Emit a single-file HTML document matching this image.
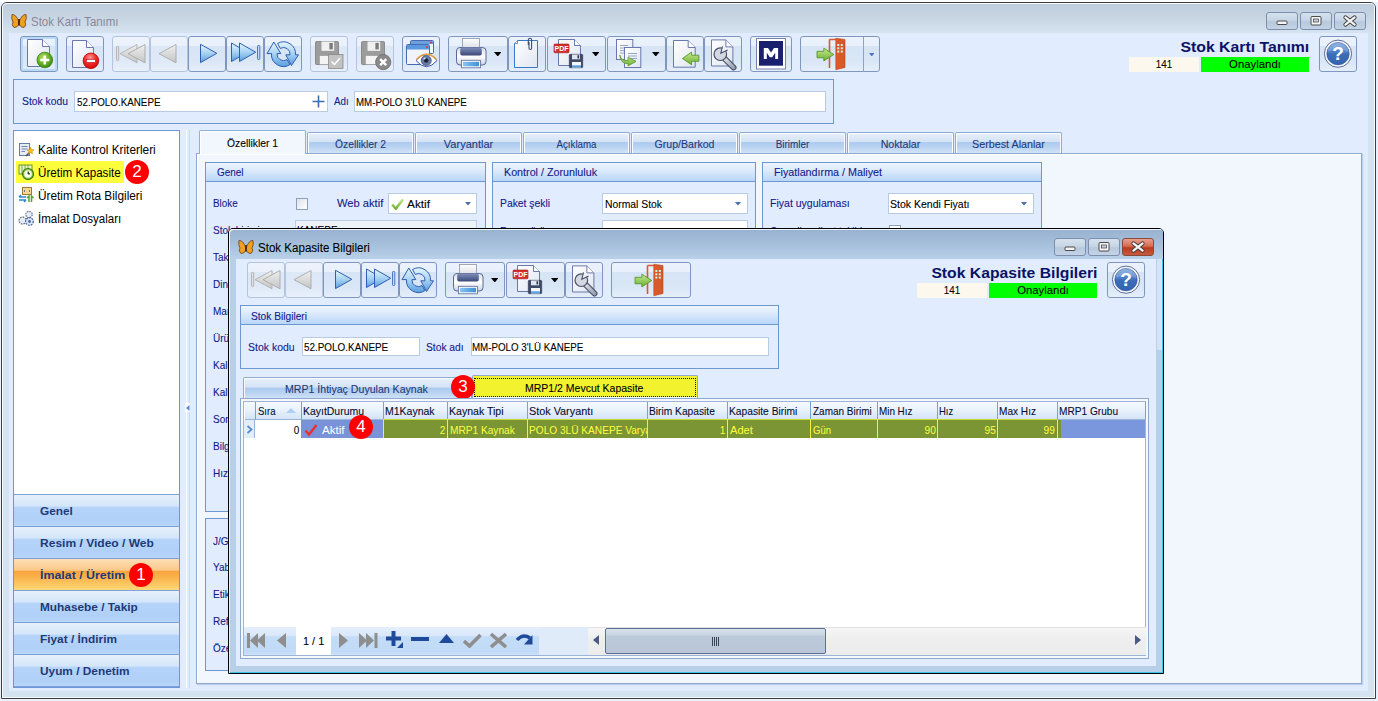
<!DOCTYPE html><html><head><meta charset="utf-8"><style>
*{box-sizing:border-box}
html,body{margin:0;padding:0}
body{width:1378px;height:701px;overflow:hidden;position:relative;background:#e8f1fc;font-family:"Liberation Sans",sans-serif;font-size:11px}
.a{position:absolute}
.t{position:absolute;white-space:nowrap}
.btn{position:absolute;border:1px solid #7f97bf;border-radius:3px;background:linear-gradient(#ebf2fc 0,#e8f0fb 25%,#d7e4f5 27%,#d9e6f6 70%,#e5eefa 100%)}
.btn.dis{border-color:#b3c4db;background:linear-gradient(#edf3fc 0,#eaf1fb 25%,#dde8f6 27%,#dfe9f7 70%,#e8f0fb 100%)}
.inp{position:absolute;background:#fff;border:1px solid #b9cbe4}
.grp{position:absolute;border:1px solid #6e97d0;background:#e1edfe}
.gh{position:absolute;background:linear-gradient(#eef5fe 0,#dae9fb 45%,#b9d6f8 100%);border-bottom:1px solid #6e97d0}
.tab{position:absolute;border:1px solid #8fa8d4;border-bottom:none;border-radius:2px 2px 0 0;box-shadow:inset 1px 1px 0 #fafcff,inset -1px 0 0 #fafcff;background:linear-gradient(#e9f0fa 0,#d3e2f5 44%,#acc9ee 48%,#bcd5f2 75%,#d2e3f8 100%)}
.badge{position:absolute;width:24px;height:24px;border-radius:50%;background:#ff0000;color:#fff;font-size:17px;line-height:24px;text-align:center;font-weight:normal}
.nav{position:absolute;left:14px;width:165px;height:32px;border-top:1px solid #7ea2d6;background:linear-gradient(#e6f0fc 0,#d4e6fb 36%,#b6d4f9 39%,#b0d0f8 80%,#b8d6f9 100%)}
.hd{position:absolute;top:402px;height:18px;border-right:1px solid #7aa0d4;border-bottom:1px solid #9bb5da;background:linear-gradient(#f6faff 0,#e8f1fc 50%,#d3e3f6 100%)}
.cell{position:absolute;top:419px;height:19px;background:#7b9434;border-left:1px solid #f0f040;color:#ffff40;box-shadow:inset 0 1px 0 #c8dc30}
</style></head><body><svg width="0" height="0" style="position:absolute"><defs>
<linearGradient id="gdoc" x1="0" y1="0" x2="1" y2="1"><stop offset="0" stop-color="#ffffff"/><stop offset="1" stop-color="#dfe5f0"/></linearGradient>
<radialGradient id="ggreen" cx=".4" cy=".35" r=".7"><stop offset="0" stop-color="#b5e06a"/><stop offset=".6" stop-color="#5fae22"/><stop offset="1" stop-color="#3d8a12"/></radialGradient>
<radialGradient id="gred" cx=".45" cy=".3" r=".75"><stop offset="0" stop-color="#ff9a9a"/><stop offset=".5" stop-color="#f02828"/><stop offset="1" stop-color="#c80a0a"/></radialGradient>
<linearGradient id="gblue" x1="0" y1="0" x2="0" y2="1"><stop offset="0" stop-color="#d4e8fb"/><stop offset=".5" stop-color="#7fb6ea"/><stop offset="1" stop-color="#3c86d6"/></linearGradient>
<linearGradient id="gblue2" x1="0" y1="0" x2="0" y2="1"><stop offset="0" stop-color="#e4f6fe"/><stop offset=".5" stop-color="#a6d2f2"/><stop offset="1" stop-color="#5a9ee0"/></linearGradient>
<linearGradient id="ggreen2" x1="0" y1="0" x2="0" y2="1"><stop offset="0" stop-color="#c8e890"/><stop offset="1" stop-color="#6ab030"/></linearGradient>
<linearGradient id="gpaper" x1="0" y1="0" x2="0" y2="1"><stop offset="0" stop-color="#ffffff"/><stop offset="1" stop-color="#d4d8e0"/></linearGradient>
<linearGradient id="gpbody" x1="0" y1="0" x2="0" y2="1"><stop offset="0" stop-color="#d8dce8"/><stop offset=".5" stop-color="#ffffff"/><stop offset="1" stop-color="#c8d0e0"/></linearGradient>
<linearGradient id="gpslot" x1="0" y1="0" x2="0" y2="1"><stop offset="0" stop-color="#8090b8"/><stop offset="1" stop-color="#3a4878"/></linearGradient>
<linearGradient id="gtray" x1="0" y1="0" x2="1" y2="0"><stop offset="0" stop-color="#8ac4f0"/><stop offset="1" stop-color="#3a90d8"/></linearGradient>
<linearGradient id="gwrench" x1="0" y1="0" x2="1" y2="1"><stop offset="0" stop-color="#f0f2f6"/><stop offset="1" stop-color="#98a0b0"/></linearGradient>
<linearGradient id="ggray" x1="0" y1="0" x2="0" y2="1"><stop offset="0" stop-color="#f0f0f0"/><stop offset="1" stop-color="#c4c4c4"/></linearGradient>
<linearGradient id="ghelp" x1="0" y1="0" x2="0" y2="1"><stop offset="0" stop-color="#7aa4dc"/><stop offset=".45" stop-color="#4a7cc4"/><stop offset=".5" stop-color="#3e6eb8"/><stop offset="1" stop-color="#3462b0"/></linearGradient>
<linearGradient id="gdoor" x1="0" y1="0" x2="1" y2="0"><stop offset="0" stop-color="#e0582a"/><stop offset="1" stop-color="#d05a2a"/></linearGradient>
</defs></svg>
<div class="a" style="left:0;top:0;width:1378px;height:2px;background:#fdfeff"></div>
<div class="a" style="left:1px;top:2px;width:1375px;height:697px;border:1px solid #3e3e3e;border-radius:6px 6px 0 0;background:#d5e2ef"></div>
<div class="a" style="left:2px;top:3px;width:1373px;height:695px;border-radius:5px 5px 0 0;box-shadow:inset 1px 1px 0 #f6f9fd,inset -1px -1px 0 #f6f9fd"></div>
<div class="a" style="left:3px;top:4px;width:1371px;height:29px;border-radius:4px 4px 0 0;background:linear-gradient(#bfcedd 0,#c6d4e2 40%,#d5e2ef 100%)"></div>
<div class="a" style="left:9px;top:33px;width:1359px;height:658px;background:#e1edfe"></div>
<svg class="a" style="left:11px;top:13px" width="16" height="16" viewBox="0 0 16 16"><path d="M8,9 Q5,1 1,1.5 Q0,6 2,9 Q0,12 3,14.5 Q6,15 8,11 Z" fill="#f0a020" stroke="#5a3010" stroke-width=".7"/><path d="M8,9 Q11,1 15,1.5 Q16,6 14,9 Q16,12 13,14.5 Q10,15 8,11 Z" fill="#f0a020" stroke="#5a3010" stroke-width=".7"/><path d="M8,6 V12.5" stroke="#3a2010" stroke-width="1.6"/></svg>
<div class="t" style="left:31px;top:14.0px;font-size:12.5px;line-height:16px;color:#8a8698;font-weight:normal;letter-spacing:0px;transform:scaleX(0.9148532967392015);transform-origin:0 0;">Stok Kartı Tanımı</div>
<div class="a" style="left:1266px;top:12px;width:32px;height:18px;border:1px solid #7c8fae;border-radius:3px;background:linear-gradient(#d6e1ee 0,#c7d5e5 45%,#b8c9dd 55%,#c4d3e4 100%)"></div>
<svg class="a" style="left:1266px;top:12px" width="32" height="18" viewBox="0 0 32 18"><rect x="11.0" y="9.0" width="10" height="3.5" rx="1" fill="#f4f4f4" stroke="#3a3a3a" stroke-width=".9"/></svg>
<div class="a" style="left:1300px;top:12px;width:32px;height:18px;border:1px solid #7c8fae;border-radius:3px;background:linear-gradient(#d6e1ee 0,#c7d5e5 45%,#b8c9dd 55%,#c4d3e4 100%)"></div>
<svg class="a" style="left:1300px;top:12px" width="32" height="18" viewBox="0 0 32 18"><rect x="11.0" y="4.5" width="10" height="8.5" rx="1" fill="#f4f4f4" stroke="#3a3a3a" stroke-width=".9"/><rect x="13.4" y="7.0" width="5.2" height="3" fill="#c8d2e0" stroke="#3a3a3a" stroke-width=".7"/></svg>
<div class="a" style="left:1334px;top:12px;width:32px;height:18px;border:1px solid #7c8fae;border-radius:3px;background:linear-gradient(#d6e1ee 0,#c7d5e5 45%,#b8c9dd 55%,#c4d3e4 100%)"></div>
<svg class="a" style="left:1334px;top:12px" width="32" height="18" viewBox="0 0 32 18"><path d="M11.4,5.4 L20.6,12.6 M20.6,5.4 L11.4,12.6" stroke="#3a3a3a" stroke-width="4" stroke-linecap="round"/><path d="M11.4,5.4 L20.6,12.6 M20.6,5.4 L11.4,12.6" stroke="#f6f6f6" stroke-width="2.3" stroke-linecap="round"/></svg>
<div class="btn" style="left:20px;top:36px;width:38px;height:36px;box-shadow:inset 0 0 0 2px #b9daf6"></div>
<svg class="a" style="left:20px;top:36px" width="38" height="36" viewBox="0 0 38 36"><path d="M7.5,3.5 H22.5 L29.5,10.5 V30.5 H7.5 Z" fill="url(#gdoc)" stroke="#6a78ad"/><path d="M22.5,3.5 V10.5 H29.5" fill="#fff" stroke="#6a78ad"/><circle cx="24.8" cy="24" r="7.8" fill="url(#ggreen)" stroke="#3a7a14" stroke-width=".8"/><path d="M24.8,19.5V28.5M20.3,24H29.3" stroke="#fff" stroke-width="2.6"/></svg>
<div class="btn" style="left:66px;top:36px;width:38px;height:36px;"></div>
<svg class="a" style="left:66px;top:36px" width="38" height="36" viewBox="0 0 38 36"><path d="M6.5,4.5 H20.5 L27.5,11.5 V31.5 H6.5 Z" fill="url(#gdoc)" stroke="#6a78ad"/><path d="M20.5,4.5 V11.5 H27.5" fill="#fff" stroke="#6a78ad"/><circle cx="24.9" cy="24.8" r="7.8" fill="url(#gred)" stroke="#b80000" stroke-width=".8"/><rect x="20.3" y="23.3" width="9.2" height="3.2" fill="#fff" stroke="#c00000" stroke-width=".6"/></svg>
<div class="btn dis" style="left:112px;top:36px;width:38px;height:36px;"></div>
<svg class="a" style="left:112px;top:36px" width="37" height="36" viewBox="0 0 37 36"><rect x="4.5" y="10.5" width="2.2" height="14" rx=".8" fill="#e0e0e0" stroke="#a8a8a8" stroke-width=".8"/><path d="M25,8.5 V26.8 L8,17.7 Z" fill="url(#ggray)" stroke="#b0b0b0" stroke-width=".9"/><path d="M33,8.5 V26.8 L16,17.7 Z" fill="url(#ggray)" stroke="#a8a8a8" stroke-width=".9"/></svg>
<div class="btn dis" style="left:150px;top:36px;width:38px;height:36px;"></div>
<svg class="a" style="left:150px;top:36px" width="37" height="36" viewBox="0 0 37 36"><path d="M26,8.5 V26.8 L9,17.7 Z" fill="url(#ggray)" stroke="#a8a8a8" stroke-width=".9"/></svg>
<div class="btn" style="left:188px;top:36px;width:38px;height:36px;"></div>
<svg class="a" style="left:188px;top:36px" width="37" height="36" viewBox="0 0 37 36"><path d="M12.5,8.3 V26.6 L28.8,17.3 Z" fill="url(#gblue2)" stroke="#2f5fb0" stroke-width="1"/></svg>
<div class="btn" style="left:226px;top:36px;width:38px;height:36px;"></div>
<svg class="a" style="left:226px;top:36px" width="37" height="36" viewBox="0 0 37 36"><path d="M5.5,7 V25.5 L21.5,16.2 Z" fill="url(#gblue2)" stroke="#2f5fb0" stroke-width="1"/><path d="M13.5,7 V25.5 L29.7,16.2 Z" fill="url(#gblue2)" stroke="#2f5fb0" stroke-width="1"/><rect x="31.5" y="9.5" width="2.3" height="14" rx=".8" fill="#b8daf6" stroke="#2f5fb0" stroke-width=".8"/></svg>
<div class="btn" style="left:264px;top:36px;width:38px;height:36px;"></div>
<svg class="a" style="left:264px;top:36px" width="37" height="36" viewBox="0 0 37 36"><path d="M26,28.6 A12,12 0 0 1 7.5,17.6 L3,17.6 L9.8,6 L16.8,17.6 L13,17.6 A6.5,6.5 0 0 0 23,23.6 Z" fill="url(#gblue2)" stroke="#2f5fb0" stroke-width="1"/><path d="M13.5,7.5 A12,12 0 0 1 31.5,18.8 L34.5,18.8 L27.5,29.5 L21.8,18.8 L26,18.8 A6.5,6.5 0 0 0 16.3,12.4 Z" fill="url(#gblue2)" stroke="#2f5fb0" stroke-width="1"/></svg>
<div class="btn dis" style="left:310px;top:36px;width:38px;height:36px;"></div>
<svg class="a" style="left:310px;top:36px" width="38" height="36" viewBox="0 0 38 36"><rect x="5.5" y="5.5" width="23" height="23" rx="1" fill="#9c9c9c" stroke="#7c7c7c" stroke-width=".8"/><rect x="11.48" y="5.5" width="12.72" height="9.36" fill="#f0f0f0"/><rect x="19.4" y="6.92" width="3.3600000000000003" height="6.48" fill="#7a7a7a"/><rect x="9.8" y="19.88" width="14.399999999999999" height="8.399999999999999" fill="#f4f4f4"/><rect x="18.5" y="18.5" width="14.5" height="14" fill="#c2c2c2" stroke="#8a8a8a" stroke-width=".8"/><path d="M21.5,25.5 L24.5,28.5 L30,22" fill="none" stroke="#fff" stroke-width="1.5"/></svg>
<div class="btn dis" style="left:356px;top:36px;width:38px;height:36px;"></div>
<svg class="a" style="left:356px;top:36px" width="38" height="36" viewBox="0 0 38 36"><rect x="5.5" y="5.5" width="23" height="23" rx="1" fill="#9c9c9c" stroke="#7c7c7c" stroke-width=".8"/><rect x="11.48" y="5.5" width="12.72" height="9.36" fill="#f0f0f0"/><rect x="19.4" y="6.92" width="3.3600000000000003" height="6.48" fill="#7a7a7a"/><rect x="9.8" y="19.88" width="14.399999999999999" height="8.399999999999999" fill="#f4f4f4"/><circle cx="27.2" cy="26.1" r="7.6" fill="#8a8a8a" stroke="#6a6a6a" stroke-width=".8"/><path d="M24.2,23.1 L30.2,29.1 M30.2,23.1 L24.2,29.1" stroke="#fff" stroke-width="2.4"/></svg>
<div class="btn" style="left:402px;top:36px;width:38px;height:36px;"></div>
<svg class="a" style="left:402px;top:36px" width="38" height="36" viewBox="0 0 38 36"><rect x="8.5" y="4.5" width="23" height="13" rx="1" fill="#f4f8fc" stroke="#4a6ab0"/><rect x="9" y="5" width="22" height="3" fill="#6aa0e0"/><circle cx="29" cy="6.5" r="1" fill="#f03030"/><rect x="4.5" y="8.5" width="23" height="20" rx="1" fill="#f0f4fa" stroke="#4a6ab0"/><rect x="5" y="9" width="22" height="4.5" fill="#5a98e0"/><circle cx="25" cy="11" r="1.1" fill="#f03030"/><path d="M14,24.5 Q24.5,12 35,24.5 Q24.5,37 14,24.5 Z" fill="#fff" stroke="#3a58a8" stroke-width="1"/><path d="M14.5,23.5 Q24.5,13 34.5,23.5" fill="none" stroke="#e8a040" stroke-width="1.6"/><circle cx="24.2" cy="24.5" r="5" fill="#6a7ea8" stroke="#3a4a78" stroke-width=".8"/><circle cx="24.2" cy="24.5" r="2.3" fill="#1a2440"/><circle cx="22.5" cy="22.5" r="1" fill="#c8f0f0"/></svg>
<div class="btn" style="left:448px;top:36px;width:60px;height:36px;"></div>
<svg class="a" style="left:448px;top:36px" width="42" height="36" viewBox="0 0 42 36"><rect x="14.5" y="2.5" width="17" height="12" fill="url(#gpaper)" stroke="#8a94a8" stroke-width=".8"/><rect x="8.5" y="11.5" width="29.5" height="17.5" rx="3.5" fill="url(#gpbody)" stroke="#5a6894" stroke-width="1"/><rect x="12.2" y="11.5" width="21.6" height="8" rx="2" fill="url(#gpslot)"/><rect x="13.5" y="24.3" width="19" height="7.5" fill="#fff" stroke="#5a6894" stroke-width=".8"/><rect x="15" y="25.8" width="16" height="4.5" fill="url(#gtray)"/></svg>
<svg class="a" style="left:493.7px;top:51.8px" width="7.5" height="4.5" viewBox="0 0 7.5 4.5"><path d="M0,0 H7.5 L3.75,4.5 Z" fill="#000"/></svg>
<div class="btn" style="left:508px;top:36px;width:38px;height:36px;"></div>
<svg class="a" style="left:508px;top:36px" width="38" height="36" viewBox="0 0 38 36"><path d="M9.5,4.5 H29.5 V31.5 H6.5 V7.5 Z" fill="url(#gdoc)" stroke="#3a78c8" stroke-width="1"/><path d="M6.5,7.5 L9.5,7.5 L9.5,4.5" fill="#fff" stroke="#3a78c8" stroke-width=".8"/><path d="M21,6 V12 Q21,13.5 22.3,13.5 Q23.6,13.5 23.6,12 V4 Q23.6,2.2 22,2.2 Q20.3,2.2 20.3,4 V9" fill="none" stroke="#3a4a78" stroke-width="1.1"/></svg>
<div class="btn" style="left:547px;top:36px;width:59px;height:36px;"></div>
<svg class="a" style="left:547px;top:36px" width="42" height="36" viewBox="0 0 42 36"><path d="M11.5,3.5 H27.5 L33.5,9.5 V29.5 H11.5 Z" fill="url(#gdoc)" stroke="#6a78ad"/><path d="M27.5,3.5 V9.5 H33.5" fill="#fff" stroke="#6a78ad"/><rect x="7" y="8" width="15" height="8.8" rx="1" fill="#d42e2e" stroke="#a01818" stroke-width=".6"/><text x="14.5" y="15" font-size="7" font-weight="bold" fill="#fff" text-anchor="middle" font-family="Liberation Sans">PDF</text><rect x="22.3" y="18.3" width="13.4" height="13.4" rx="1" fill="#3e4a68" stroke="#2a3248" stroke-width=".6"/><rect x="25" y="18.5" width="8" height="4.8" fill="#dfe4ee"/><rect x="30.5" y="19.2" width="1.6" height="3.2" fill="#2a3248"/><rect x="25" y="26" width="9" height="5.5" fill="#f4f6fa"/><rect x="25" y="29.3" width="9" height="2.2" fill="#5aa0e0"/></svg>
<svg class="a" style="left:591.7px;top:51.8px" width="7.5" height="4.5" viewBox="0 0 7.5 4.5"><path d="M0,0 H7.5 L3.75,4.5 Z" fill="#000"/></svg>
<div class="btn" style="left:607px;top:36px;width:59px;height:36px;"></div>
<svg class="a" style="left:607px;top:36px" width="42" height="36" viewBox="0 0 42 36"><rect x="9.5" y="3.5" width="16.3" height="20" fill="url(#gdoc)" stroke="#6a78ad" stroke-width="1"/><path d="M13,9.5H21M13,12H20M13,14.5H21M13,17H20" stroke="#8a9ac0" stroke-width=".9"/><rect x="17.5" y="11.5" width="16.3" height="20" fill="url(#gdoc)" stroke="#6a78ad" stroke-width="1"/><path d="M21,17.5H30M21,20H30M21,22.5H30M21,25H29" stroke="#8a9ac0" stroke-width=".9"/><path d="M12.8,19 Q14,25 21,24.5 V21 L28.9,25.5 L21,30 V27.5 Q14,28.5 12.8,19 Z" fill="url(#ggreen2)" stroke="#4a9020" stroke-width=".7"/></svg>
<svg class="a" style="left:652px;top:51.8px" width="7.5" height="4.5" viewBox="0 0 7.5 4.5"><path d="M0,0 H7.5 L3.75,4.5 Z" fill="#000"/></svg>
<div class="btn" style="left:666px;top:36px;width:38px;height:36px;"></div>
<svg class="a" style="left:666px;top:36px" width="38" height="36" viewBox="0 0 38 36"><path d="M7.5,4.5 H22.2 L29.2,11.5 V31.2 H7.5 Z" fill="url(#gdoc)" stroke="#6a78ad"/><path d="M22.2,4.5 V11.5 H29.2" fill="#fff" stroke="#6a78ad"/><path d="M16.4,22.5 L25.6,16 V19.2 H32.9 V25.3 H25.6 V28.8 Z" fill="url(#ggreen2)" stroke="#4a9020" stroke-width=".8"/></svg>
<div class="btn" style="left:704px;top:36px;width:38px;height:36px;"></div>
<svg class="a" style="left:704px;top:36px" width="38" height="36" viewBox="0 0 38 36"><path d="M7.5,3.9 H21.9 L28.9,10.9 V30.0 H7.5 Z" fill="url(#gdoc)" stroke="#6a78ad"/><path d="M21.9,3.9 V10.9 H28.9" fill="#fff" stroke="#6a78ad"/><path d="M17.5,19.5 L29.5,31.5" stroke="#48506a" stroke-width="6" stroke-linecap="round"/><path d="M17.5,19.5 L29.5,31.5" stroke="url(#gwrench)" stroke-width="3.8" stroke-linecap="round"/><circle cx="16.3" cy="18.2" r="6.3" fill="#d4d8e2" stroke="#48506a" stroke-width="1.2"/><path d="M16.6,18 L18.5,9.5 L24.5,13.5 Z" fill="#eef2f8"/><path d="M18.5,10.3 L16.8,17.2 L23.6,14" fill="none" stroke="#48506a" stroke-width="1.1"/></svg>
<div class="btn" style="left:750px;top:36px;width:42px;height:36px;"></div>
<svg class="a" style="left:750px;top:36px" width="42" height="36" viewBox="0 0 42 36"><rect x="6.5" y="2.5" width="29" height="30.5" fill="#ffffff" stroke="#7a82b0" stroke-width="1"/><rect x="9" y="5" width="24" height="24.7" fill="#1a1f6e"/><path d="M13.8,23.1 V12 H18 L21,16.6 L24,12 H28.1 V23.1 H25.2 V16.8 L22.2,21.2 H19.8 L16.8,16.8 V23.1 Z" fill="#fff"/></svg>
<div class="btn" style="left:800px;top:36px;width:80px;height:36px;"></div>
<svg class="a" style="left:800px;top:36px" width="50" height="36" viewBox="0 0 50 36"><path d="M29.5,3.5 H36 M29.5,3.5 V32" fill="none" stroke="#d85a30" stroke-width="1.6"/><path d="M35.8,2.2 L45,3.5 V31.5 L35.8,33.8 Z" fill="url(#gdoor)" stroke="#b84818" stroke-width=".6"/><rect x="37.3" y="8" width="2" height="2" fill="#d8f0e0"/><rect x="40.8" y="8" width="2" height="2" fill="#d8f0e0"/><rect x="37.3" y="11.3" width="2" height="2" fill="#d8f0e0"/><rect x="40.8" y="11.3" width="2" height="2" fill="#d8f0e0"/><rect x="37.3" y="14.6" width="2" height="2" fill="#d8f0e0"/><rect x="40.8" y="14.6" width="2" height="2" fill="#d8f0e0"/><path d="M17,15.3 H23.8 V12.2 L33.8,18.5 L23.8,24.9 V21.8 H17 Z" fill="url(#ggreen2)" stroke="#4a9020" stroke-width=".8"/></svg>
<div class="a" style="left:863px;top:37px;width:1px;height:35px;background:#8ea3c4"></div>
<svg class="a" style="left:868.8px;top:52.8px" width="5.5" height="3.5" viewBox="0 0 5.5 3.5"><path d="M0,0 H5.5 L2.75,3.5 Z" fill="#4a78c0"/></svg>
<div class="t" style="right:69px;text-align:right;top:37.0px;font-size:15px;line-height:20px;color:#0c1266;font-weight:bold;letter-spacing:0px;transform:scaleX(1.0536595342178594);transform-origin:100% 0;">Stok Kartı Tanımı</div>
<div class="a" style="left:1129px;top:57px;width:70px;height:15px;background:#fdf8ee"></div>
<div class="t" style="left:1129px;width:70px;text-align:center;top:57.0px;font-size:11.5px;line-height:15px;color:#000;font-weight:normal;letter-spacing:0px;transform:scaleX(0.8547927355647853);transform-origin:50% 0;-webkit-text-stroke:0.1px #000;">141</div>
<div class="a" style="left:1201px;top:57px;width:108px;height:15px;background:#00ff00"></div>
<div class="t" style="left:1201px;width:108px;text-align:center;top:57.0px;font-size:11.5px;line-height:15px;color:#000;font-weight:normal;letter-spacing:0px;transform:scaleX(0.9881371087928464);transform-origin:50% 0;-webkit-text-stroke:0.1px #000;">Onaylandı</div>
<div class="btn" style="left:1319px;top:36px;width:38px;height:36px;"></div>
<svg class="a" style="left:1319px;top:36px" width="38" height="36" viewBox="0 0 38 36"><circle cx="19" cy="17.7" r="13.6" fill="#f8fafe" stroke="#5a6a98" stroke-width="1"/><circle cx="19" cy="17.7" r="11.2" fill="url(#ghelp)" stroke="#2a5098" stroke-width=".6"/><path d="M8.5,16 Q19,11 29.5,16 Q29,6.5 19,6.5 Q9,6.5 8.5,16 Z" fill="#ffffff" opacity=".18"/><text x="19" y="24.3" font-size="19" font-weight="bold" fill="#fff" text-anchor="middle" font-family="Liberation Sans">?</text></svg>
<div class="grp" style="left:13px;top:79px;width:821px;height:45px"></div>
<div class="t" style="left:21.5px;top:93.0px;font-size:11.5px;line-height:16px;color:#14188a;font-weight:normal;letter-spacing:0px;transform:scaleX(0.8994531178393572);transform-origin:0 0;-webkit-text-stroke:0.1px #14188a;">Stok kodu</div>
<div class="inp" style="left:74px;top:91px;width:254px;height:21px"></div>
<div class="t" style="left:76.5px;top:93.5px;font-size:11.5px;line-height:16px;color:#000;font-weight:normal;letter-spacing:0px;transform:scaleX(0.8538377963826932);transform-origin:0 0;-webkit-text-stroke:0.1px #000;">52.POLO.KANEPE</div>
<svg class="a" style="left:312px;top:95px" width="13" height="13" viewBox="0 0 13 13"><path d="M6.5,0.5V12.5M0.5,6.5H12.5" stroke="#3e6db2" stroke-width="1.6"/></svg>
<div class="t" style="left:333.8px;top:93.0px;font-size:11.5px;line-height:16px;color:#14188a;font-weight:normal;letter-spacing:0px;transform:scaleX(0.8516339277631936);transform-origin:0 0;-webkit-text-stroke:0.1px #14188a;">Adı</div>
<div class="inp" style="left:354px;top:91px;width:472px;height:21px"></div>
<div class="t" style="left:355.7px;top:93.5px;font-size:11.5px;line-height:16px;color:#000;font-weight:normal;letter-spacing:0px;transform:scaleX(0.8439794813201461);transform-origin:0 0;-webkit-text-stroke:0.1px #000;">MM-POLO 3'LÜ KANEPE</div>
<div class="a" style="left:13px;top:130px;width:167px;height:558px;border:1px solid #6b98d8;background:#fff"></div>
<svg class="a" style="left:18px;top:142px" width="16" height="16" viewBox="0 0 16 16"><rect x="1.5" y="1.5" width="10" height="12" fill="#e8ecf6" stroke="#6a78b0"/><path d="M3.5,4.5H9.5M3.5,7H9.5M3.5,9.5H7" stroke="#6a78b0" stroke-width=".9"/><path d="M8,14 L14,8" stroke="#505050" stroke-width="1.6"/><path d="M12.5,5 L13.5,7.5 L16,8 L14,9.5 L14.5,12 L12.5,10.5 L10.5,12 L11,9.5 L9,8 L11.5,7.5 Z" fill="#f8c020" stroke="#d08000" stroke-width=".5"/></svg>
<div class="t" style="left:38px;top:142.0px;font-size:12.5px;line-height:16px;color:#000;font-weight:normal;letter-spacing:0px;transform:scaleX(0.9465219139525534);transform-origin:0 0;">Kalite Kontrol Kriterleri</div>
<div class="a" style="left:16px;top:161px;width:108px;height:22px;background:#ffff3c"></div>
<svg class="a" style="left:18px;top:164px" width="16" height="16" viewBox="0 0 16 16"><rect x="1" y="1" width="13" height="9" fill="#e8f4c8" stroke="#6a9a2a"/><path d="M4,1V10M7,1V10M10,1V10" stroke="#6a9a2a" stroke-width=".8"/><circle cx="10" cy="10" r="5.5" fill="#8cc640" stroke="#3a7a10" stroke-width="1.2"/><circle cx="10" cy="10" r="3.8" fill="#f8fff0"/><path d="M10,7.5V10H12" stroke="#3a5a10" stroke-width="1"/></svg>
<div class="t" style="left:38px;top:164.5px;font-size:12.5px;line-height:16px;color:#000;font-weight:normal;letter-spacing:0px;transform:scaleX(0.9300462141313326);transform-origin:0 0;">Üretim Kapasite</div>
<div class="badge" style="left:125px;top:160px">2</div>
<svg class="a" style="left:18px;top:187px" width="16" height="16" viewBox="0 0 16 16"><rect x="4.5" y="0.5" width="9" height="7" fill="#f8d890" stroke="#a07830"/><path d="M7,3 L6,4 L7,5 M11,3 L12,4 L11,5" stroke="#4060a0" stroke-width=".8" fill="none"/><path d="M1,10 H8 M1,10 L3,8 M8,13 H1 M8,13 L6,15" stroke="#2a88c8" stroke-width="1.5" fill="none"/><path d="M11,15 V9 L9,11 M13.5,15 V9 L15.5,11" stroke="#5aa030" stroke-width="1.5" fill="none"/></svg>
<div class="t" style="left:38px;top:187.5px;font-size:12.5px;line-height:16px;color:#000;font-weight:normal;letter-spacing:0px;transform:scaleX(0.9453176949958263);transform-origin:0 0;">Üretim Rota Bilgileri</div>
<svg class="a" style="left:18px;top:210px" width="16" height="16" viewBox="0 0 16 16"><circle cx="11" cy="4.5" r="3.2" fill="#e8ecf4" stroke="#6a7890" stroke-width="1.2" stroke-dasharray="1.6 .9"/><circle cx="4.5" cy="10.5" r="3.5" fill="#e8ecf4" stroke="#6a7890" stroke-width="1.3" stroke-dasharray="1.7 1"/><circle cx="11.5" cy="11.5" r="3.8" fill="#e0e8f8" stroke="#4a68a8" stroke-width="1.3" stroke-dasharray="1.8 1"/><circle cx="11.5" cy="11.5" r="1.4" fill="#4a68a8"/></svg>
<div class="t" style="left:38px;top:210.5px;font-size:12.5px;line-height:16px;color:#000;font-weight:normal;letter-spacing:0px;transform:scaleX(0.9213094331787667);transform-origin:0 0;">İmalat Dosyaları</div>
<div class="nav" style="top:494px"></div>
<div class="t" style="left:40px;top:502.5px;font-size:11.5px;line-height:16px;color:#1e3a78;font-weight:bold;letter-spacing:0px;transform:scaleX(1.0295325640524153);transform-origin:0 0;">Genel</div>
<div class="nav" style="top:526px"></div>
<div class="t" style="left:40px;top:534.5px;font-size:11.5px;line-height:16px;color:#1e3a78;font-weight:bold;letter-spacing:0px;transform:scaleX(1.0463190228078487);transform-origin:0 0;">Resim / Video / Web</div>
<div class="nav" style="top:558px;background:linear-gradient(#fddfb4 0,#fbc88a 36%,#f9a43c 40%,#fab54e 62%,#fcd878 100%)"></div>
<div class="t" style="left:40px;top:566.5px;font-size:11.5px;line-height:16px;color:#1e3a78;font-weight:bold;letter-spacing:0px;transform:scaleX(1.0763831381363618);transform-origin:0 0;">İmalat / Üretim</div>
<div class="nav" style="top:590px"></div>
<div class="t" style="left:40px;top:598.5px;font-size:11.5px;line-height:16px;color:#1e3a78;font-weight:bold;letter-spacing:0px;transform:scaleX(1.0295325640524153);transform-origin:0 0;">Muhasebe / Takip</div>
<div class="nav" style="top:622px"></div>
<div class="t" style="left:40px;top:630.5px;font-size:11.5px;line-height:16px;color:#1e3a78;font-weight:bold;letter-spacing:0px;transform:scaleX(1.0295325640524153);transform-origin:0 0;">Fiyat / İndirim</div>
<div class="nav" style="top:654px"></div>
<div class="t" style="left:40px;top:662.5px;font-size:11.5px;line-height:16px;color:#1e3a78;font-weight:bold;letter-spacing:0px;transform:scaleX(1.0295325640524153);transform-origin:0 0;">Uyum / Denetim</div>
<div class="a" style="left:14px;top:686px;width:166px;height:1px;background:#7ea2d6"></div>
<div class="badge" style="left:129px;top:563px">1</div>
<div class="a" style="left:186px;top:130px;width:1px;height:558px;background:#fbfdff"></div>
<div class="a" style="left:189px;top:130px;width:1px;height:558px;background:#c6dbf8"></div>
<div class="a" style="left:185px;top:403px;width:5px;height:9px;background:#fbfdff"></div>
<svg class="a" style="left:185.5px;top:404.5px" width="4" height="6" viewBox="0 0 4 6"><path d="M3.5,0 V6 L0,3 Z" fill="#5a88d0"/></svg>
<div class="a" style="left:196px;top:153px;width:1166px;height:531px;border:1px solid #8ea8d0;background:#f2f7fe;box-shadow:inset 1px 1px 0 #fff,1px 1px 1px rgba(120,150,200,.35)"></div>
<div class="tab" style="left:307px;top:132px;width:107px;height:21px"></div>
<div class="t" style="left:307px;width:107px;text-align:center;top:136.3px;font-size:11.5px;line-height:16px;color:#1e3a7a;font-weight:normal;letter-spacing:0px;transform:scaleX(0.8967032967032967);transform-origin:50% 0;-webkit-text-stroke:0.1px #1e3a7a;">Özellikler 2</div>
<div class="tab" style="left:415px;top:132px;width:107px;height:21px"></div>
<div class="t" style="left:415px;width:107px;text-align:center;top:136.3px;font-size:11.5px;line-height:16px;color:#1e3a7a;font-weight:normal;letter-spacing:0px;transform:scaleX(0.958147710397915);transform-origin:50% 0;-webkit-text-stroke:0.1px #1e3a7a;">Varyantlar</div>
<div class="tab" style="left:523px;top:132px;width:107px;height:21px"></div>
<div class="t" style="left:523px;width:107px;text-align:center;top:136.3px;font-size:11.5px;line-height:16px;color:#1e3a7a;font-weight:normal;letter-spacing:0px;transform:scaleX(0.8458336086697945);transform-origin:50% 0;-webkit-text-stroke:0.1px #1e3a7a;">Açıklama</div>
<div class="tab" style="left:631px;top:132px;width:107px;height:21px"></div>
<div class="t" style="left:631px;width:107px;text-align:center;top:136.3px;font-size:11.5px;line-height:16px;color:#1e3a7a;font-weight:normal;letter-spacing:0px;transform:scaleX(0.9202895077409767);transform-origin:50% 0;-webkit-text-stroke:0.1px #1e3a7a;">Grup/Barkod</div>
<div class="tab" style="left:739px;top:132px;width:107px;height:21px"></div>
<div class="t" style="left:739px;width:107px;text-align:center;top:136.3px;font-size:11.5px;line-height:16px;color:#1e3a7a;font-weight:normal;letter-spacing:0px;transform:scaleX(0.859663191659984);transform-origin:50% 0;-webkit-text-stroke:0.1px #1e3a7a;">Birimler</div>
<div class="tab" style="left:847px;top:132px;width:107px;height:21px"></div>
<div class="t" style="left:847px;width:107px;text-align:center;top:136.3px;font-size:11.5px;line-height:16px;color:#1e3a7a;font-weight:normal;letter-spacing:0px;transform:scaleX(0.9271300857507755);transform-origin:50% 0;-webkit-text-stroke:0.1px #1e3a7a;">Noktalar</div>
<div class="tab" style="left:955px;top:132px;width:107px;height:21px"></div>
<div class="t" style="left:955px;width:107px;text-align:center;top:136.3px;font-size:11.5px;line-height:16px;color:#1e3a7a;font-weight:normal;letter-spacing:0px;transform:scaleX(0.9334829299567239);transform-origin:50% 0;-webkit-text-stroke:0.1px #1e3a7a;">Serbest Alanlar</div>
<div class="a" style="left:199px;top:130px;width:107px;height:24px;border:1px solid #8fb0da;border-bottom:none;border-radius:2px 2px 0 0;background:#f2f7fe;box-shadow:inset 1px 1px 0 #fff"></div>
<div class="t" style="left:199px;width:107px;text-align:center;top:135.0px;font-size:11.5px;line-height:16px;color:#000;font-weight:normal;letter-spacing:0px;transform:scaleX(0.8967032967032967);transform-origin:50% 0;-webkit-text-stroke:0.1px #000;">Özellikler 1</div>
<div class="grp" style="left:205px;top:162px;width:281px;height:350px"></div>
<div class="gh" style="left:206px;top:163px;width:279px;height:19px"></div>
<div class="t" style="left:216.5px;top:164.0px;font-size:11.5px;line-height:16px;color:#14188a;font-weight:normal;letter-spacing:0px;transform:scaleX(0.8635877590508682);transform-origin:0 0;-webkit-text-stroke:0.1px #14188a;">Genel</div>
<div class="grp" style="left:492px;top:162px;width:264px;height:439px"></div>
<div class="gh" style="left:493px;top:163px;width:262px;height:19px"></div>
<div class="t" style="left:503.5px;top:164.0px;font-size:11.5px;line-height:16px;color:#14188a;font-weight:normal;letter-spacing:0px;transform:scaleX(0.9326814591951861);transform-origin:0 0;-webkit-text-stroke:0.1px #14188a;">Kontrol / Zorunluluk</div>
<div class="grp" style="left:762px;top:162px;width:280px;height:439px"></div>
<div class="gh" style="left:763px;top:163px;width:278px;height:19px"></div>
<div class="t" style="left:773.5px;top:164.0px;font-size:11.5px;line-height:16px;color:#14188a;font-weight:normal;letter-spacing:0px;transform:scaleX(0.933675536944482);transform-origin:0 0;-webkit-text-stroke:0.1px #14188a;">Fiyatlandırma / Maliyet</div>
<div class="grp" style="left:205px;top:518px;width:396px;height:153px"></div>
<div class="t" style="left:213px;top:195.0px;font-size:11.5px;line-height:16px;color:#14188a;font-weight:normal;letter-spacing:0px;transform:scaleX(0.8551873981531777);transform-origin:0 0;-webkit-text-stroke:0.1px #14188a;">Bloke</div>
<div class="a" style="left:296px;top:198px;width:12px;height:12px;border:1px solid #8f9fb8;background:linear-gradient(135deg,#dde3ec,#ffffff)"></div>
<div class="t" style="left:336.5px;top:194.5px;font-size:11.5px;line-height:16px;color:#14188a;font-weight:normal;letter-spacing:0px;transform:scaleX(0.9701731984415413);transform-origin:0 0;-webkit-text-stroke:0.1px #14188a;">Web aktif</div>
<div class="inp" style="left:388px;top:193px;width:89px;height:21px"></div>
<svg class="a" style="left:391px;top:198px" width="13" height="12" viewBox="0 0 13 12"><path d="M1.2,6.5 L4.8,10.8 L12,1.2" fill="none" stroke="url(#ggreen2)" stroke-width="2.5" stroke-linejoin="round"/></svg>
<div class="t" style="left:407px;top:195.5px;font-size:11.5px;line-height:16px;color:#000;font-weight:normal;letter-spacing:0px;transform:scaleX(1.0283638395975967);transform-origin:0 0;-webkit-text-stroke:0.1px #000;">Aktif</div>
<svg class="a" style="left:464.5px;top:201.5px" width="7" height="4" viewBox="0 0 7 4"><path d="M0,0H6L3,3.5Z" fill="#4a6ea8"/></svg>
<div class="inp" style="left:295px;top:220px;width:182px;height:21px;background:#eef3fa"></div>
<div class="t" style="left:297px;top:221.5px;font-size:11.5px;line-height:16px;color:#000;font-weight:normal;letter-spacing:0px;transform:scaleX(0.87);transform-origin:0 0;-webkit-text-stroke:0.1px #000;">KANEPE</div>
<div class="t" style="left:213px;top:221.5px;font-size:11.5px;line-height:16px;color:#14188a;font-weight:normal;letter-spacing:0px;transform:scaleX(0.87);transform-origin:0 0;-webkit-text-stroke:0.1px #14188a;">Stok birimi</div>
<div class="t" style="left:213px;top:249.0px;font-size:11.5px;line-height:16px;color:#14188a;font-weight:normal;letter-spacing:0px;transform:scaleX(0.87);transform-origin:0 0;-webkit-text-stroke:0.1px #14188a;">Takip şekli</div>
<div class="t" style="left:213px;top:276.0px;font-size:11.5px;line-height:16px;color:#14188a;font-weight:normal;letter-spacing:0px;transform:scaleX(0.87);transform-origin:0 0;-webkit-text-stroke:0.1px #14188a;">Dinamik</div>
<div class="t" style="left:213px;top:303.0px;font-size:11.5px;line-height:16px;color:#14188a;font-weight:normal;letter-spacing:0px;transform:scaleX(0.87);transform-origin:0 0;-webkit-text-stroke:0.1px #14188a;">Marka</div>
<div class="t" style="left:213px;top:330.0px;font-size:11.5px;line-height:16px;color:#14188a;font-weight:normal;letter-spacing:0px;transform:scaleX(0.87);transform-origin:0 0;-webkit-text-stroke:0.1px #14188a;">Ürün tipi</div>
<div class="t" style="left:213px;top:357.0px;font-size:11.5px;line-height:16px;color:#14188a;font-weight:normal;letter-spacing:0px;transform:scaleX(0.87);transform-origin:0 0;-webkit-text-stroke:0.1px #14188a;">Kalite 1</div>
<div class="t" style="left:213px;top:384.0px;font-size:11.5px;line-height:16px;color:#14188a;font-weight:normal;letter-spacing:0px;transform:scaleX(0.87);transform-origin:0 0;-webkit-text-stroke:0.1px #14188a;">Kalite 2</div>
<div class="t" style="left:213px;top:411.0px;font-size:11.5px;line-height:16px;color:#14188a;font-weight:normal;letter-spacing:0px;transform:scaleX(0.87);transform-origin:0 0;-webkit-text-stroke:0.1px #14188a;">Sorumlu</div>
<div class="t" style="left:213px;top:438.0px;font-size:11.5px;line-height:16px;color:#14188a;font-weight:normal;letter-spacing:0px;transform:scaleX(0.87);transform-origin:0 0;-webkit-text-stroke:0.1px #14188a;">Bilgi</div>
<div class="t" style="left:213px;top:465.0px;font-size:11.5px;line-height:16px;color:#14188a;font-weight:normal;letter-spacing:0px;transform:scaleX(0.87);transform-origin:0 0;-webkit-text-stroke:0.1px #14188a;">Hız</div>
<div class="t" style="left:213px;top:533.0px;font-size:11.5px;line-height:16px;color:#14188a;font-weight:normal;letter-spacing:0px;transform:scaleX(0.87);transform-origin:0 0;-webkit-text-stroke:0.1px #14188a;">J/G</div>
<div class="t" style="left:213px;top:559.0px;font-size:11.5px;line-height:16px;color:#14188a;font-weight:normal;letter-spacing:0px;transform:scaleX(0.87);transform-origin:0 0;-webkit-text-stroke:0.1px #14188a;">Yabancı</div>
<div class="t" style="left:213px;top:586.0px;font-size:11.5px;line-height:16px;color:#14188a;font-weight:normal;letter-spacing:0px;transform:scaleX(0.87);transform-origin:0 0;-webkit-text-stroke:0.1px #14188a;">Etiket</div>
<div class="t" style="left:213px;top:613.0px;font-size:11.5px;line-height:16px;color:#14188a;font-weight:normal;letter-spacing:0px;transform:scaleX(0.87);transform-origin:0 0;-webkit-text-stroke:0.1px #14188a;">Referans</div>
<div class="t" style="left:213px;top:640.0px;font-size:11.5px;line-height:16px;color:#14188a;font-weight:normal;letter-spacing:0px;transform:scaleX(0.87);transform-origin:0 0;-webkit-text-stroke:0.1px #14188a;">Özel</div>
<div class="t" style="left:500.3px;top:195.0px;font-size:11.5px;line-height:16px;color:#14188a;font-weight:normal;letter-spacing:0px;transform:scaleX(0.8991794987074294);transform-origin:0 0;-webkit-text-stroke:0.1px #14188a;">Paket şekli</div>
<div class="inp" style="left:602px;top:193px;width:146px;height:21px"></div>
<div class="t" style="left:604.5px;top:195.5px;font-size:11.5px;line-height:16px;color:#000;font-weight:normal;letter-spacing:0px;transform:scaleX(0.9009632007903186);transform-origin:0 0;-webkit-text-stroke:0.1px #000;">Normal Stok</div>
<svg class="a" style="left:735px;top:201.5px" width="7" height="4" viewBox="0 0 7 4"><path d="M0,0H6L3,3.5Z" fill="#4a6ea8"/></svg>
<div class="inp" style="left:602px;top:220px;width:146px;height:21px"></div>
<div class="t" style="left:500px;top:222.5px;font-size:11.5px;line-height:16px;color:#14188a;font-weight:normal;letter-spacing:0px;transform:scaleX(0.87);transform-origin:0 0;-webkit-text-stroke:0.1px #14188a;">Fason ürün</div>
<div class="t" style="left:770.3px;top:195.0px;font-size:11.5px;line-height:16px;color:#14188a;font-weight:normal;letter-spacing:0px;transform:scaleX(0.9157648750674096);transform-origin:0 0;-webkit-text-stroke:0.1px #14188a;">Fiyat uygulaması</div>
<div class="inp" style="left:888px;top:193px;width:146px;height:21px"></div>
<div class="t" style="left:890.2px;top:195.5px;font-size:11.5px;line-height:16px;color:#000;font-weight:normal;letter-spacing:0px;transform:scaleX(0.9145486572958983);transform-origin:0 0;-webkit-text-stroke:0.1px #000;">Stok Kendi Fiyatı</div>
<svg class="a" style="left:1021px;top:201.5px" width="7" height="4" viewBox="0 0 7 4"><path d="M0,0H6L3,3.5Z" fill="#4a6ea8"/></svg>
<div class="t" style="left:770px;top:222.5px;font-size:11.5px;line-height:16px;color:#14188a;font-weight:normal;letter-spacing:0px;transform:scaleX(0.87);transform-origin:0 0;-webkit-text-stroke:0.1px #14188a;">Geçerli maliyet takibi</div>
<div class="a" style="left:889px;top:225px;width:12px;height:12px;border:1px solid #8f9fb8;background:#fff"></div>
<div class="a" style="left:228px;top:228px;width:936px;height:446px;border:1px solid #000;border-radius:5px 5px 0 0;background:#b8cfe8;box-shadow:inset -1px -1px 0 #3cc8ec"></div>
<div class="a" style="left:229px;top:229px;width:934px;height:30px;border-radius:4px 4px 0 0;background:linear-gradient(#97b2d0 0,#a4bdd9 45%,#b8d0e9 100%);box-shadow:inset 1px 1px 0 #f0f6fc"></div>
<div class="a" style="left:229px;top:259px;width:1px;height:414px;background:#e8f0f8"></div>
<svg class="a" style="left:238px;top:239px" width="16" height="16" viewBox="0 0 16 16"><path d="M8,9 Q5,1 1,1.5 Q0,6 2,9 Q0,12 3,14.5 Q6,15 8,11 Z" fill="#f0a020" stroke="#5a3010" stroke-width=".7"/><path d="M8,9 Q11,1 15,1.5 Q16,6 14,9 Q16,12 13,14.5 Q10,15 8,11 Z" fill="#f0a020" stroke="#5a3010" stroke-width=".7"/><path d="M8,6 V12.5" stroke="#3a2010" stroke-width="1.6"/></svg>
<div class="t" style="left:258px;top:239.5px;font-size:12.5px;line-height:16px;color:#000;font-weight:normal;letter-spacing:0px;transform:scaleX(0.9248148483242643);transform-origin:0 0;-webkit-text-stroke:0.1px #000;">Stok Kapasite Bilgileri</div>
<div class="a" style="left:1054px;top:238px;width:32px;height:18px;border:1px solid #7c8fae;border-radius:3px;background:linear-gradient(#d6e1ee 0,#c7d5e5 45%,#b8c9dd 55%,#c4d3e4 100%)"></div>
<svg class="a" style="left:1054px;top:238px" width="32" height="18" viewBox="0 0 32 18"><rect x="11.0" y="9.0" width="10" height="3.5" rx="1" fill="#f4f4f4" stroke="#3a3a3a" stroke-width=".9"/></svg>
<div class="a" style="left:1088px;top:238px;width:32px;height:18px;border:1px solid #7c8fae;border-radius:3px;background:linear-gradient(#d6e1ee 0,#c7d5e5 45%,#b8c9dd 55%,#c4d3e4 100%)"></div>
<svg class="a" style="left:1088px;top:238px" width="32" height="18" viewBox="0 0 32 18"><rect x="11.0" y="4.5" width="10" height="8.5" rx="1" fill="#f4f4f4" stroke="#3a3a3a" stroke-width=".9"/><rect x="13.4" y="7.0" width="5.2" height="3" fill="#c8d2e0" stroke="#3a3a3a" stroke-width=".7"/></svg>
<div class="a" style="left:1122px;top:238px;width:32px;height:18px;border:1px solid #8a4a3a;border-radius:3px;background:linear-gradient(#e8a090 0,#d66a50 45%,#b83a20 55%,#c85a40 100%)"></div>
<svg class="a" style="left:1122px;top:238px" width="32" height="18" viewBox="0 0 32 18"><path d="M11.4,5.4 L20.6,12.6 M20.6,5.4 L11.4,12.6" stroke="#3a3a3a" stroke-width="4" stroke-linecap="round"/><path d="M11.4,5.4 L20.6,12.6 M20.6,5.4 L11.4,12.6" stroke="#f6f6f6" stroke-width="2.3" stroke-linecap="round"/></svg>
<div class="a" style="left:236px;top:259px;width:920px;height:407px;background:#e1edfe"></div>
<div class="a" style="left:1157px;top:259px;width:5px;height:91px;background:#d6e3f2"></div>
<div class="btn dis" style="left:247px;top:262px;width:38px;height:36px;"></div>
<svg class="a" style="left:247px;top:262px" width="37" height="36" viewBox="0 0 37 36"><rect x="4.5" y="10.5" width="2.2" height="14" rx=".8" fill="#e0e0e0" stroke="#a8a8a8" stroke-width=".8"/><path d="M25,8.5 V26.8 L8,17.7 Z" fill="url(#ggray)" stroke="#b0b0b0" stroke-width=".9"/><path d="M33,8.5 V26.8 L16,17.7 Z" fill="url(#ggray)" stroke="#a8a8a8" stroke-width=".9"/></svg>
<div class="btn dis" style="left:285px;top:262px;width:38px;height:36px;"></div>
<svg class="a" style="left:285px;top:262px" width="37" height="36" viewBox="0 0 37 36"><path d="M26,8.5 V26.8 L9,17.7 Z" fill="url(#ggray)" stroke="#a8a8a8" stroke-width=".9"/></svg>
<div class="btn" style="left:323px;top:262px;width:38px;height:36px;"></div>
<svg class="a" style="left:323px;top:262px" width="37" height="36" viewBox="0 0 37 36"><path d="M12.5,8.3 V26.6 L28.8,17.3 Z" fill="url(#gblue2)" stroke="#2f5fb0" stroke-width="1"/></svg>
<div class="btn" style="left:361px;top:262px;width:38px;height:36px;"></div>
<svg class="a" style="left:361px;top:262px" width="37" height="36" viewBox="0 0 37 36"><path d="M5.5,7 V25.5 L21.5,16.2 Z" fill="url(#gblue2)" stroke="#2f5fb0" stroke-width="1"/><path d="M13.5,7 V25.5 L29.7,16.2 Z" fill="url(#gblue2)" stroke="#2f5fb0" stroke-width="1"/><rect x="31.5" y="9.5" width="2.3" height="14" rx=".8" fill="#b8daf6" stroke="#2f5fb0" stroke-width=".8"/></svg>
<div class="btn" style="left:399px;top:262px;width:38px;height:36px;"></div>
<svg class="a" style="left:399px;top:262px" width="37" height="36" viewBox="0 0 37 36"><path d="M26,28.6 A12,12 0 0 1 7.5,17.6 L3,17.6 L9.8,6 L16.8,17.6 L13,17.6 A6.5,6.5 0 0 0 23,23.6 Z" fill="url(#gblue2)" stroke="#2f5fb0" stroke-width="1"/><path d="M13.5,7.5 A12,12 0 0 1 31.5,18.8 L34.5,18.8 L27.5,29.5 L21.8,18.8 L26,18.8 A6.5,6.5 0 0 0 16.3,12.4 Z" fill="url(#gblue2)" stroke="#2f5fb0" stroke-width="1"/></svg>
<div class="btn" style="left:445px;top:262px;width:60px;height:36px;"></div>
<svg class="a" style="left:445px;top:262px" width="42" height="36" viewBox="0 0 42 36"><rect x="14.5" y="2.5" width="17" height="12" fill="url(#gpaper)" stroke="#8a94a8" stroke-width=".8"/><rect x="8.5" y="11.5" width="29.5" height="17.5" rx="3.5" fill="url(#gpbody)" stroke="#5a6894" stroke-width="1"/><rect x="12.2" y="11.5" width="21.6" height="8" rx="2" fill="url(#gpslot)"/><rect x="13.5" y="24.3" width="19" height="7.5" fill="#fff" stroke="#5a6894" stroke-width=".8"/><rect x="15" y="25.8" width="16" height="4.5" fill="url(#gtray)"/></svg>
<svg class="a" style="left:490.7px;top:277.8px" width="7.5" height="4.5" viewBox="0 0 7.5 4.5"><path d="M0,0 H7.5 L3.75,4.5 Z" fill="#000"/></svg>
<div class="btn" style="left:506px;top:262px;width:59px;height:36px;"></div>
<svg class="a" style="left:506px;top:262px" width="42" height="36" viewBox="0 0 42 36"><path d="M11.5,3.5 H27.5 L33.5,9.5 V29.5 H11.5 Z" fill="url(#gdoc)" stroke="#6a78ad"/><path d="M27.5,3.5 V9.5 H33.5" fill="#fff" stroke="#6a78ad"/><rect x="7" y="8" width="15" height="8.8" rx="1" fill="#d42e2e" stroke="#a01818" stroke-width=".6"/><text x="14.5" y="15" font-size="7" font-weight="bold" fill="#fff" text-anchor="middle" font-family="Liberation Sans">PDF</text><rect x="22.3" y="18.3" width="13.4" height="13.4" rx="1" fill="#3e4a68" stroke="#2a3248" stroke-width=".6"/><rect x="25" y="18.5" width="8" height="4.8" fill="#dfe4ee"/><rect x="30.5" y="19.2" width="1.6" height="3.2" fill="#2a3248"/><rect x="25" y="26" width="9" height="5.5" fill="#f4f6fa"/><rect x="25" y="29.3" width="9" height="2.2" fill="#5aa0e0"/></svg>
<svg class="a" style="left:550.7px;top:277.8px" width="7.5" height="4.5" viewBox="0 0 7.5 4.5"><path d="M0,0 H7.5 L3.75,4.5 Z" fill="#000"/></svg>
<div class="btn" style="left:565px;top:262px;width:38px;height:36px;"></div>
<svg class="a" style="left:565px;top:262px" width="38" height="36" viewBox="0 0 38 36"><path d="M7.5,3.9 H21.9 L28.9,10.9 V30.0 H7.5 Z" fill="url(#gdoc)" stroke="#6a78ad"/><path d="M21.9,3.9 V10.9 H28.9" fill="#fff" stroke="#6a78ad"/><path d="M17.5,19.5 L29.5,31.5" stroke="#48506a" stroke-width="6" stroke-linecap="round"/><path d="M17.5,19.5 L29.5,31.5" stroke="url(#gwrench)" stroke-width="3.8" stroke-linecap="round"/><circle cx="16.3" cy="18.2" r="6.3" fill="#d4d8e2" stroke="#48506a" stroke-width="1.2"/><path d="M16.6,18 L18.5,9.5 L24.5,13.5 Z" fill="#eef2f8"/><path d="M18.5,10.3 L16.8,17.2 L23.6,14" fill="none" stroke="#48506a" stroke-width="1.1"/></svg>
<div class="btn" style="left:611px;top:262px;width:80px;height:36px;"></div>
<svg class="a" style="left:618px;top:262px" width="50" height="36" viewBox="0 0 50 36"><path d="M29.5,3.5 H36 M29.5,3.5 V32" fill="none" stroke="#d85a30" stroke-width="1.6"/><path d="M35.8,2.2 L45,3.5 V31.5 L35.8,33.8 Z" fill="url(#gdoor)" stroke="#b84818" stroke-width=".6"/><rect x="37.3" y="8" width="2" height="2" fill="#d8f0e0"/><rect x="40.8" y="8" width="2" height="2" fill="#d8f0e0"/><rect x="37.3" y="11.3" width="2" height="2" fill="#d8f0e0"/><rect x="40.8" y="11.3" width="2" height="2" fill="#d8f0e0"/><rect x="37.3" y="14.6" width="2" height="2" fill="#d8f0e0"/><rect x="40.8" y="14.6" width="2" height="2" fill="#d8f0e0"/><path d="M17,15.3 H23.8 V12.2 L33.8,18.5 L23.8,24.9 V21.8 H17 Z" fill="url(#ggreen2)" stroke="#4a9020" stroke-width=".8"/></svg>
<div class="t" style="right:281px;text-align:right;top:263.0px;font-size:15px;line-height:20px;color:#0c1266;font-weight:bold;letter-spacing:0px;transform:scaleX(1.0481348842256883);transform-origin:100% 0;">Stok Kapasite Bilgileri</div>
<div class="a" style="left:917px;top:283px;width:70px;height:15px;background:#fdf8ee"></div>
<div class="t" style="left:917px;width:70px;text-align:center;top:283.0px;font-size:11.5px;line-height:15px;color:#000;font-weight:normal;letter-spacing:0px;transform:scaleX(0.8547927355647853);transform-origin:50% 0;-webkit-text-stroke:0.1px #000;">141</div>
<div class="a" style="left:989px;top:283px;width:108px;height:15px;background:#00ff00"></div>
<div class="t" style="left:989px;width:108px;text-align:center;top:283.0px;font-size:11.5px;line-height:15px;color:#000;font-weight:normal;letter-spacing:0px;transform:scaleX(0.9862295081967214);transform-origin:50% 0;-webkit-text-stroke:0.1px #000;">Onaylandı</div>
<div class="btn" style="left:1107px;top:262px;width:38px;height:36px;"></div>
<svg class="a" style="left:1107px;top:262px" width="38" height="36" viewBox="0 0 38 36"><circle cx="19" cy="17.7" r="13.6" fill="#f8fafe" stroke="#5a6a98" stroke-width="1"/><circle cx="19" cy="17.7" r="11.2" fill="url(#ghelp)" stroke="#2a5098" stroke-width=".6"/><path d="M8.5,16 Q19,11 29.5,16 Q29,6.5 19,6.5 Q9,6.5 8.5,16 Z" fill="#ffffff" opacity=".18"/><text x="19" y="24.3" font-size="19" font-weight="bold" fill="#fff" text-anchor="middle" font-family="Liberation Sans">?</text></svg>
<div class="grp" style="left:240px;top:305px;width:539px;height:64px"></div>
<div class="gh" style="left:241px;top:306px;width:537px;height:19px"></div>
<div class="t" style="left:251.3px;top:307.5px;font-size:11.5px;line-height:16px;color:#14188a;font-weight:normal;letter-spacing:0px;transform:scaleX(0.8850912503395648);transform-origin:0 0;-webkit-text-stroke:0.1px #14188a;">Stok Bilgileri</div>
<div class="t" style="left:248.4px;top:338.5px;font-size:11.5px;line-height:16px;color:#14188a;font-weight:normal;letter-spacing:0px;transform:scaleX(0.9131404478934344);transform-origin:0 0;-webkit-text-stroke:0.1px #14188a;">Stok kodu</div>
<div class="inp" style="left:302px;top:337px;width:118px;height:19px"></div>
<div class="t" style="left:303.8px;top:338.5px;font-size:11.5px;line-height:16px;color:#000;font-weight:normal;letter-spacing:0px;transform:scaleX(0.8609957180290152);transform-origin:0 0;-webkit-text-stroke:0.1px #000;">52.POLO.KANEPE</div>
<div class="t" style="left:426.4px;top:338.5px;font-size:11.5px;line-height:16px;color:#14188a;font-weight:normal;letter-spacing:0px;transform:scaleX(0.8911602414546531);transform-origin:0 0;-webkit-text-stroke:0.1px #14188a;">Stok adı</div>
<div class="inp" style="left:471px;top:337px;width:298px;height:19px"></div>
<div class="t" style="left:472px;top:338.5px;font-size:11.5px;line-height:16px;color:#000;font-weight:normal;letter-spacing:0px;transform:scaleX(0.8477880529867533);transform-origin:0 0;-webkit-text-stroke:0.1px #000;">MM-POLO 3'LÜ KANEPE</div>
<div class="tab" style="left:243px;top:377px;width:229px;height:22px"></div>
<div class="t" style="left:284.5px;top:380.5px;font-size:11.5px;line-height:16px;color:#1e3a7a;font-weight:normal;letter-spacing:0px;transform:scaleX(0.9200434590157338);transform-origin:0 0;-webkit-text-stroke:0.1px #1e3a7a;">MRP1 İhtiyaç Duyulan Kaynak</div>
<div class="a" style="left:472px;top:375px;width:226px;height:24px;border:1px solid #8fa8d0;border-bottom:none;border-radius:2px 2px 0 0;background:#f2f22e"></div>
<div class="a" style="left:473px;top:397px;width:224px;height:2px;background:#f8fbff"></div>
<div class="a" style="left:474px;top:378px;width:222px;height:19px;border:1px dotted #101010"></div>
<div class="t" style="left:524.6px;top:380.0px;font-size:11.5px;line-height:16px;color:#000;font-weight:normal;letter-spacing:0px;transform:scaleX(0.9125350738809476);transform-origin:0 0;-webkit-text-stroke:0.1px #000;">MRP1/2 Mevcut Kapasite</div>
<div class="badge" style="left:451px;top:375px">3</div>
<div class="a" style="left:240px;top:398px;width:909px;height:261px;border:1px solid #8fa8d0;background:#fff;box-shadow:inset 0 0 0 2px #f4f8fd"></div>
<div class="a" style="left:243px;top:401px;width:903px;height:255px;border:1px solid #9db4d8;background:#fff"></div>
<div class="hd" style="left:245px;width:11px"></div>
<div class="hd" style="left:256px;width:46px"></div>
<div class="t" style="left:257.5px;top:402.5px;font-size:11.5px;line-height:16px;color:#080c30;font-weight:normal;letter-spacing:0px;transform:scaleX(0.8297525559342125);transform-origin:0 0;-webkit-text-stroke:0.1px #080c30;">Sıra</div>
<div class="hd" style="left:302px;width:82px"></div>
<div class="t" style="left:303px;top:402.5px;font-size:11.5px;line-height:16px;color:#080c30;font-weight:normal;letter-spacing:0px;transform:scaleX(0.9090062401043122);transform-origin:0 0;-webkit-text-stroke:0.1px #080c30;">KayıtDurumu</div>
<div class="hd" style="left:384px;width:64px"></div>
<div class="t" style="left:385.1px;top:402.5px;font-size:11.5px;line-height:16px;color:#080c30;font-weight:normal;letter-spacing:0px;transform:scaleX(0.912918440124238);transform-origin:0 0;-webkit-text-stroke:0.1px #080c30;">M1Kaynak</div>
<div class="hd" style="left:448px;width:80px"></div>
<div class="t" style="left:449.1px;top:402.5px;font-size:11.5px;line-height:16px;color:#080c30;font-weight:normal;letter-spacing:0px;transform:scaleX(0.916784944540819);transform-origin:0 0;-webkit-text-stroke:0.1px #080c30;">Kaynak Tipi</div>
<div class="hd" style="left:528px;width:120px"></div>
<div class="t" style="left:529.3px;top:402.5px;font-size:11.5px;line-height:16px;color:#080c30;font-weight:normal;letter-spacing:0px;transform:scaleX(0.94162942591956);transform-origin:0 0;-webkit-text-stroke:0.1px #080c30;">Stok Varyantı</div>
<div class="hd" style="left:648px;width:80px"></div>
<div class="t" style="left:649px;top:402.5px;font-size:11.5px;line-height:16px;color:#080c30;font-weight:normal;letter-spacing:0px;transform:scaleX(0.8875587497628933);transform-origin:0 0;-webkit-text-stroke:0.1px #080c30;">Birim Kapasite</div>
<div class="hd" style="left:728px;width:83px"></div>
<div class="t" style="left:729.1px;top:402.5px;font-size:11.5px;line-height:16px;color:#080c30;font-weight:normal;letter-spacing:0px;transform:scaleX(0.889287315105334);transform-origin:0 0;-webkit-text-stroke:0.1px #080c30;">Kapasite Birimi</div>
<div class="hd" style="left:811px;width:67px"></div>
<div class="t" style="left:812.6px;top:402.5px;font-size:11.5px;line-height:16px;color:#080c30;font-weight:normal;letter-spacing:0px;transform:scaleX(0.8666805084550258);transform-origin:0 0;-webkit-text-stroke:0.1px #080c30;">Zaman Birimi</div>
<div class="hd" style="left:878px;width:60px"></div>
<div class="t" style="left:879.4px;top:402.5px;font-size:11.5px;line-height:16px;color:#080c30;font-weight:normal;letter-spacing:0px;transform:scaleX(0.8569595894804362);transform-origin:0 0;-webkit-text-stroke:0.1px #080c30;">Min Hız</div>
<div class="hd" style="left:938px;width:60px"></div>
<div class="t" style="left:939.3px;top:402.5px;font-size:11.5px;line-height:16px;color:#080c30;font-weight:normal;letter-spacing:0px;transform:scaleX(0.8231884057971014);transform-origin:0 0;-webkit-text-stroke:0.1px #080c30;">Hız</div>
<div class="hd" style="left:998px;width:60px"></div>
<div class="t" style="left:999.4px;top:402.5px;font-size:11.5px;line-height:16px;color:#080c30;font-weight:normal;letter-spacing:0px;transform:scaleX(0.8773944940531327);transform-origin:0 0;-webkit-text-stroke:0.1px #080c30;">Max Hız</div>
<div class="hd" style="left:1058px;width:88px"></div>
<div class="t" style="left:1059.2px;top:402.5px;font-size:11.5px;line-height:16px;color:#080c30;font-weight:normal;letter-spacing:0px;transform:scaleX(0.8792027568222036);transform-origin:0 0;-webkit-text-stroke:0.1px #080c30;">MRP1 Grubu</div>
<svg class="a" style="left:286px;top:408px" width="10" height="5" viewBox="0 0 10 5"><path d="M0,5 L5,0 L10,5 Z" fill="#b0cff2"/></svg>
<div class="a" style="left:244px;top:420px;width:11px;height:18px;background:#e4eefb;border-right:1px solid #9bb5da"></div>
<svg class="a" style="left:246px;top:425px" width="8" height="10" viewBox="0 0 8 10"><path d="M1.5,1 L5.5,4.5 L1.5,8" fill="none" stroke="#5a8ad0" stroke-width="1.8"/></svg>
<div class="a" style="left:255px;top:420px;width:46px;height:18px;background:#fff"></div>
<div class="t" style="right:1079px;text-align:right;top:421.8px;font-size:11.5px;line-height:16px;color:#000;font-weight:normal;letter-spacing:0px;transform:scaleX(0.87);transform-origin:100% 0;-webkit-text-stroke:0.1px #000;">0</div>
<div class="a" style="left:301px;top:420px;width:83px;height:18px;background:#7a92d8"></div>
<svg class="a" style="left:304px;top:423px" width="14" height="14" viewBox="0 0 14 14"><path d="M1.5,7.5 L5,11.5 L12.5,2" fill="none" stroke="#e83030" stroke-width="2.4"/></svg>
<div class="t" style="left:321.9px;top:421.8px;font-size:11.5px;line-height:16px;color:#fff;font-weight:normal;letter-spacing:0px;transform:scaleX(1.0060081039541706);transform-origin:0 0;">Aktif</div>
<div class="cell" style="left:383px;width:64px;overflow:hidden"></div>
<div class="t" style="right:932.4px;text-align:right;top:421.8px;font-size:11.5px;line-height:16px;color:#ffff40;font-weight:normal;letter-spacing:0px;transform:scaleX(0.880253395973725);transform-origin:100% 0;">2</div>
<div class="cell" style="left:447px;width:80px;overflow:hidden"></div>
<div class="a" style="left:448px;top:420px;width:79px;height:18px;overflow:hidden"><div class="t" style="left:1.8000000000000114px;top:1.8px;font-size:11.5px;line-height:16px;color:#ffff40;transform:scaleX(0.880253395973725);transform-origin:0 0">MRP1 Kaynak</div></div>
<div class="cell" style="left:527px;width:120px;overflow:hidden"></div>
<div class="a" style="left:528px;top:420px;width:119px;height:18px;overflow:hidden"><div class="t" style="left:1.2999999999999545px;top:1.8px;font-size:11.5px;line-height:16px;color:#ffff40;transform:scaleX(0.880253395973725);transform-origin:0 0">POLO 3LÜ KANEPE Varyantı</div></div>
<div class="cell" style="left:647px;width:80px;overflow:hidden"></div>
<div class="t" style="right:653px;text-align:right;top:421.8px;font-size:11.5px;line-height:16px;color:#ffff40;font-weight:normal;letter-spacing:0px;transform:scaleX(0.880253395973725);transform-origin:100% 0;">1</div>
<div class="cell" style="left:727px;width:83px;overflow:hidden"></div>
<div class="a" style="left:728px;top:420px;width:82px;height:18px;overflow:hidden"><div class="t" style="left:1.7999999999999545px;top:1.8px;font-size:11.5px;line-height:16px;color:#ffff40;transform:scaleX(0.9680317040951122);transform-origin:0 0">Adet</div></div>
<div class="cell" style="left:810px;width:67px;overflow:hidden"></div>
<div class="a" style="left:811px;top:420px;width:66px;height:18px;overflow:hidden"><div class="t" style="left:2px;top:1.8px;font-size:11.5px;line-height:16px;color:#ffff40;transform:scaleX(0.8281216303644598);transform-origin:0 0">Gün</div></div>
<div class="cell" style="left:877px;width:60px;overflow:hidden"></div>
<div class="t" style="right:442.4px;text-align:right;top:421.8px;font-size:11.5px;line-height:16px;color:#ffff40;font-weight:normal;letter-spacing:0px;transform:scaleX(0.880253395973725);transform-origin:100% 0;">90</div>
<div class="cell" style="left:937px;width:60px;overflow:hidden"></div>
<div class="t" style="right:382.70000000000005px;text-align:right;top:421.8px;font-size:11.5px;line-height:16px;color:#ffff40;font-weight:normal;letter-spacing:0px;transform:scaleX(0.880253395973725);transform-origin:100% 0;">95</div>
<div class="cell" style="left:997px;width:60px;overflow:hidden"></div>
<div class="t" style="right:322.79999999999995px;text-align:right;top:421.8px;font-size:11.5px;line-height:16px;color:#ffff40;font-weight:normal;letter-spacing:0px;transform:scaleX(0.880253395973725);transform-origin:100% 0;">99</div>
<div class="a" style="left:1057px;top:420px;width:4px;height:18px;background:#7b9434;border-left:1px solid #f0f040"></div>
<div class="a" style="left:1061px;top:420px;width:84px;height:18px;background:#7a96dc"></div>
<div class="badge" style="left:349px;top:415px">4</div>
<div class="a" style="left:244px;top:627px;width:295px;height:28px;background:linear-gradient(#e4eefc 0,#dbe8fa 30%,#c3dcf7 35%,#c1daf7 90%,#cfe2f9 100%)"></div>
<div class="a" style="left:539px;top:627px;width:49px;height:28px;background:#e0ebfa"></div>
<div class="a" style="left:296px;top:627px;width:35px;height:28px;background:#fff"></div>
<div class="t" style="left:302.5px;top:633.4px;font-size:11.5px;line-height:16px;color:#000;font-weight:normal;letter-spacing:0px;transform:scaleX(0.9474198729139027);transform-origin:0 0;-webkit-text-stroke:0.1px #000;">1 / 1</div>
<svg class="a" style="left:247px;top:633px" width="19" height="15" viewBox="0 0 19 15"><rect x="0" y="0" width="3" height="15" fill="#8e8e8e"/><path d="M3,7.5 L11,0 V15 Z M10,7.5 L18,0 V15 Z" fill="#8e8e8e"/></svg>
<svg class="a" style="left:277px;top:633px" width="9" height="15" viewBox="0 0 9 15"><path d="M0,7.5 L9,0 V15 Z" fill="#8e8e8e"/></svg>
<svg class="a" style="left:339px;top:633px" width="9" height="15" viewBox="0 0 9 15"><path d="M9,7.5 L0,0 V15 Z" fill="#8e8e8e"/></svg>
<svg class="a" style="left:359px;top:633px" width="19" height="15" viewBox="0 0 19 15"><path d="M0,0 L8,7.5 L0,15 Z M7,0 L15,7.5 L7,15 Z" fill="#8e8e8e"/><rect x="15.5" y="0" width="3" height="15" fill="#8e8e8e"/></svg>
<svg class="a" style="left:385px;top:631px" width="19" height="18" viewBox="0 0 19 18"><path d="M6.5,0 H10.5 V5.5 H16 V9.5 H10.5 V15 H6.5 V9.5 H1 V5.5 H6.5 Z" fill="#1f4a9a"/><path d="M18,11 V17 H12 Z" fill="#1f4a9a"/></svg>
<svg class="a" style="left:411px;top:637px" width="19" height="5" viewBox="0 0 19 5"><rect x="0" y="0" width="18" height="4" fill="#1f4a9a"/></svg>
<svg class="a" style="left:439px;top:634px" width="15" height="9" viewBox="0 0 15 9"><path d="M0,9 L7.5,0 L15,9 Z" fill="#1f4a9a"/></svg>
<svg class="a" style="left:463px;top:633px" width="19" height="15" viewBox="0 0 19 15"><path d="M1,8 L6.5,13 L17.5,2" fill="none" stroke="#8e8e8e" stroke-width="3.6"/></svg>
<svg class="a" style="left:489px;top:632px" width="19" height="16" viewBox="0 0 19 16"><path d="M2,2 L17,15 M17,2 L2,15" fill="none" stroke="#8e8e8e" stroke-width="3.6"/></svg>
<svg class="a" style="left:515px;top:633px" width="19" height="15" viewBox="0 0 19 15"><path d="M2,7 Q8,0 15,5" fill="none" stroke="#1f4a9a" stroke-width="3.4"/><path d="M17.5,2 V11.5 H9 Z" fill="#1f4a9a"/></svg>
<div class="a" style="left:588px;top:627px;width:558px;height:28px;background:linear-gradient(#f6f6f6 0,#eeeeee 40%,#ececec 100%);border-top:1px solid #e2e2e2"></div>
<svg class="a" style="left:593px;top:635px" width="6" height="10" viewBox="0 0 6 10"><path d="M6,0 V10 L0,5 Z" fill="#4a5a82"/></svg>
<svg class="a" style="left:1135px;top:635px" width="6" height="10" viewBox="0 0 6 10"><path d="M0,0 V10 L6,5 Z" fill="#4a5a82"/></svg>
<div class="a" style="left:605px;top:628px;width:221px;height:26px;border:1px solid #5c6f98;border-radius:2px;background:linear-gradient(#d8e0ea 0,#c9d5e3 25%,#bccadb 30%,#b8c6d8 100%)"></div>
<svg class="a" style="left:712px;top:637px" width="8" height="9" viewBox="0 0 8 9"><path d="M.5,0V9M2.5,0V9M4.5,0V9M6.5,0V9" stroke="#3a4258" stroke-width="1"/></svg></body></html>
